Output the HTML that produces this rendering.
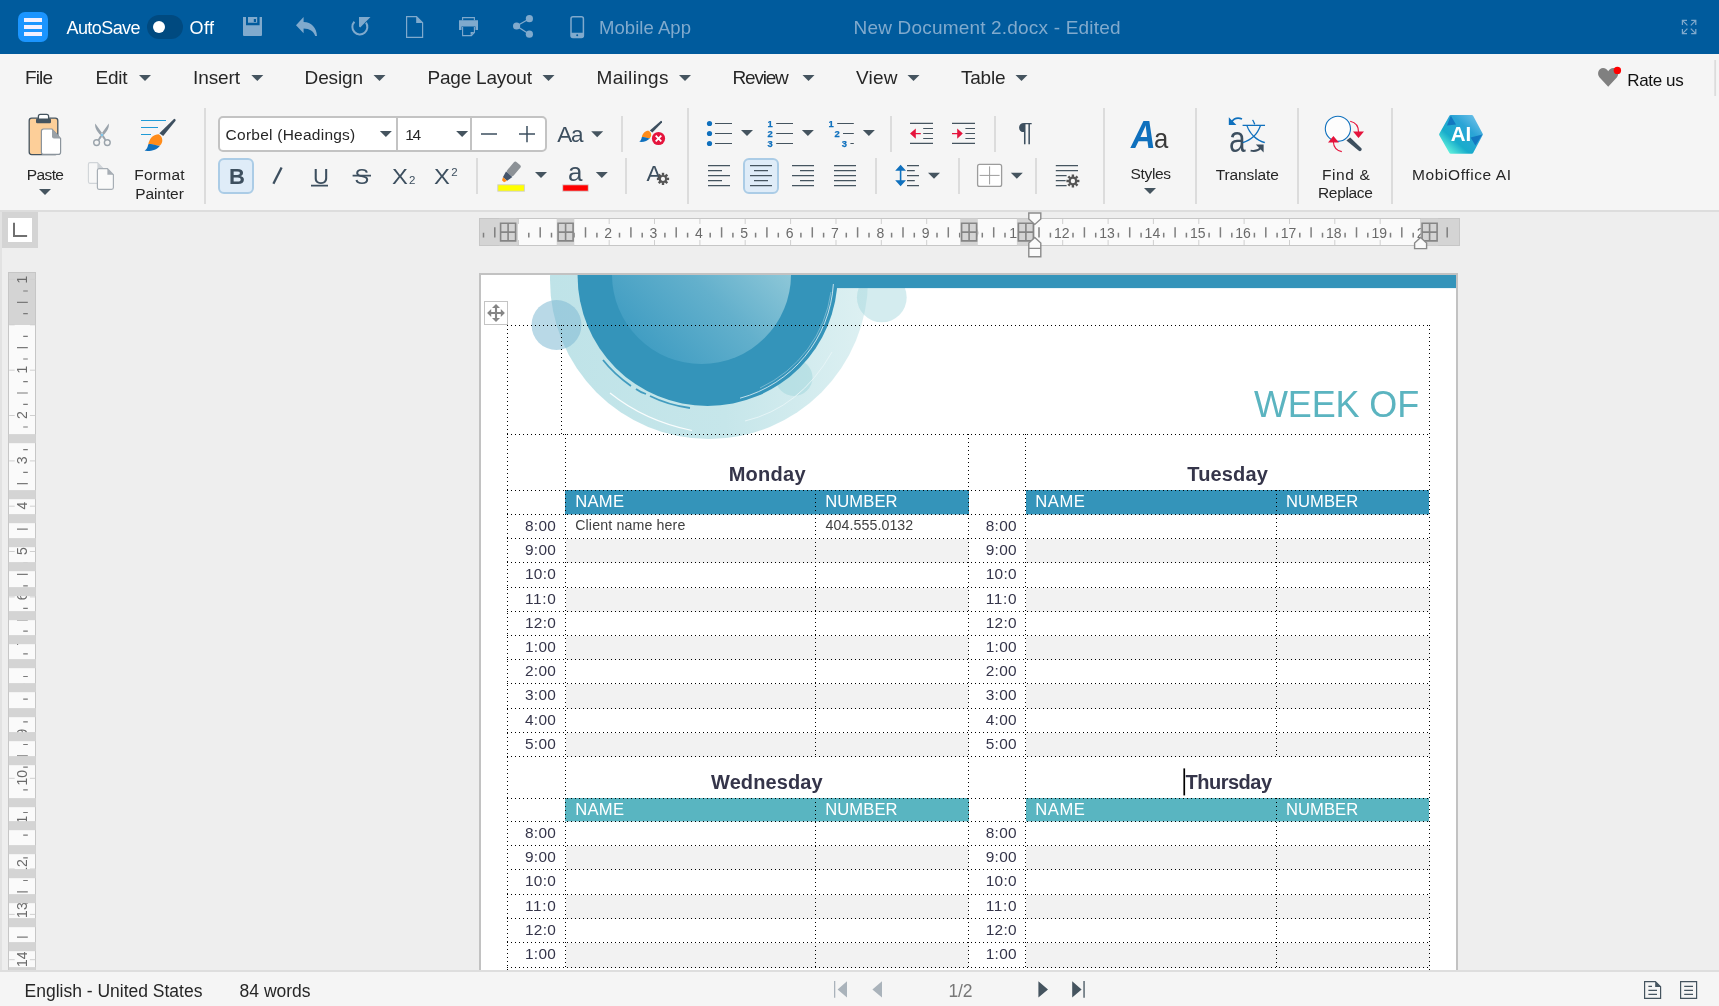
<!DOCTYPE html><html lang="en"><head><meta charset="utf-8"><title>New Document 2.docx - MobiOffice</title><style>
*{box-sizing:border-box;margin:0;padding:0}
html,body{width:1719px;height:1006px;overflow:hidden;background:#eeeeee}
body{font-family:"Liberation Sans","Noto Sans CJK SC",sans-serif;}
#app{will-change:transform;position:relative;width:1719px;height:1006px;overflow:hidden;background:#eeeeee}
.abs{position:absolute}
.t{position:absolute;white-space:nowrap;line-height:1;}
.titlebar{position:absolute;left:0;top:0;width:1719px;height:54px;background:#005B9D}
.menubar{position:absolute;left:0;top:54px;width:1719px;height:46px;background:#f5f5f5}
.ribbon{position:absolute;left:0;top:100px;width:1719px;height:112px;background:#f5f5f5;border-bottom:2px solid #dddddd}
.workspace{position:absolute;left:0;top:212px;width:1719px;height:758px;background:#eeeeee;overflow:hidden}
.statusbar{position:absolute;left:0;top:970px;width:1719px;height:36px;background:#f5f5f5;border-top:2px solid #dedede}
svg{position:absolute;left:0;top:0;overflow:visible}
.sep{position:absolute;width:2px;background:#dcdcdc}
.page{position:absolute;left:479px;top:61px;width:979px;height:720px;background:#fff;border:2px solid #c2c2c2;border-bottom:none;overflow:hidden}
</style></head><body><div id="app">
<div class="titlebar">
<div class="abs" style="left:18px;top:12px;width:30px;height:30px;border-radius:7px;background:#1B95FF"></div>
<div class="abs" style="left:24px;top:18px;width:18px;height:4px;background:#f3f0ff"></div>
<div class="abs" style="left:24px;top:25px;width:18px;height:4px;background:#f3f0ff"></div>
<div class="abs" style="left:24px;top:32px;width:18px;height:4px;background:#f3f0ff"></div>
<span class="t" style="left:66.50px;top:19.00px;font-size:18px;color:#fff;letter-spacing:-0.579px;">AutoSave</span>
<div class="abs" style="left:147px;top:15px;width:35.5px;height:24px;border-radius:12px;background:#004A80"></div>
<div class="abs" style="left:153px;top:21.4px;width:12px;height:12px;border-radius:6px;background:#fff"></div>
<span class="t" style="left:189.50px;top:19.00px;font-size:18px;color:#fff;letter-spacing:0.375px;">Off</span>
<span class="t" style="left:599.00px;top:19.00px;font-size:18.5px;color:#80AACD;letter-spacing:0.050px;">Mobile App</span>
<span class="t" style="left:853.50px;top:18.00px;font-size:19px;color:#80AACD;letter-spacing:0.189px;">New Document 2.docx - Edited</span>
<svg width="1719" height="54" viewBox="0 0 1719 54">
<path fill="#80AACD" fill-rule="evenodd" d="M243,17 H262 V35 Q262,36 261,36 H244 Q243,36 243,35 Z M246,17 V25.2 H259.6 V17 Z"/>
<path fill="#80AACD" fill-rule="evenodd" d="M248,17 H257.2 V22.7 H248 Z M253.8,19 V22 H256 V19 Z"/>
<path fill="#80AACD" d="M296,25.2 L303.6,17 V22 C311.5,22.3 316.5,27.5 317,36 H315.2 C313.5,31.2 309.8,28.6 303.6,28.5 V33.2 Z"/>
<path fill="none" stroke="#80AACD" stroke-width="2" d="M354.4,21.8 A7.5,7.5 0 1 0 366,22.6"/>
<path fill="#80AACD" d="M359,17 H370.5 L360.2,27.4 L359,26.4 Z"/>
<path fill="none" stroke="#80AACD" stroke-width="1.2" d="M406.6,16.6 H416.5 L422.6,22.8 V37.4 H406.6 Z"/>
<path fill="#80AACD" d="M416.2,16.6 L422.6,23 H416.2 Z"/>
<path fill="#80AACD" d="M459,20.3 H478 V30 H475.5 V26.6 H461.5 V30 H459 Z"/>
<path fill="none" stroke="#80AACD" stroke-width="1.1" d="M462.6,20.3 V17.6 H474.4 V20.3"/>
<path fill="none" stroke="#80AACD" stroke-width="1.1" d="M462.6,27 V35.6 H471.4 L474.4,32.6 V27"/>
<path fill="#80AACD" d="M470.6,35.6 V32 H474.6 Z"/>
<path fill="none" stroke="#80AACD" stroke-width="1.3" d="M529.4,18.7 L516.6,26 L529.4,34.2"/>
<circle cx="529.4" cy="18.7" r="3.6" fill="#80AACD"/>
<circle cx="516.6" cy="26" r="3.6" fill="#80AACD"/>
<circle cx="529.4" cy="34.2" r="3.6" fill="#80AACD"/>
<rect x="571" y="16.7" width="12.4" height="20.8" rx="2" fill="none" stroke="#80AACD" stroke-width="1.5"/>
<path fill="#80AACD" fill-rule="evenodd" d="M571,32.8 H583.4 V36 Q583.4,37.5 582,37.5 H572.4 Q571,37.5 571,36 Z M576.2,35.3 a1,1 0 1 0 2,0 a1,1 0 1 0 -2,0 Z"/>
<path fill="none" stroke="#80AACD" stroke-width="1.2" d="M1687.0,20.4 H1682.4 V25.0 M1682.4,20.4 L1687.4,25.4 M1691.2,20.4 H1695.8 V25.0 M1695.8,20.4 L1690.8,25.4 M1687.0,33.6 H1682.4 V29.0 M1682.4,33.6 L1687.4,28.6 M1691.2,33.6 H1695.8 V29.0 M1695.8,33.6 L1690.8,28.6 "/>
</svg>
</div>
<div class="menubar">
<span class="t" style="left:25.00px;top:14.00px;font-size:19px;color:#262626;letter-spacing:-0.867px;">File</span>
<span class="t" style="left:95.50px;top:14.00px;font-size:19px;color:#262626;letter-spacing:-0.250px;">Edit</span>
<span class="t" style="left:193.00px;top:14.00px;font-size:19px;color:#262626;letter-spacing:-0.100px;">Insert</span>
<span class="t" style="left:304.60px;top:14.00px;font-size:19px;color:#262626;letter-spacing:-0.150px;">Design</span>
<span class="t" style="left:427.50px;top:14.00px;font-size:19px;color:#262626;letter-spacing:-0.220px;">Page Layout</span>
<span class="t" style="left:596.50px;top:14.00px;font-size:19px;color:#262626;letter-spacing:0.329px;">Mailings</span>
<span class="t" style="left:732.50px;top:14.00px;font-size:19px;color:#262626;letter-spacing:-1.200px;">Review</span>
<span class="t" style="left:856.00px;top:14.00px;font-size:19px;color:#262626;letter-spacing:0.200px;">View</span>
<span class="t" style="left:961.00px;top:14.00px;font-size:19px;color:#262626;letter-spacing:-0.225px;">Table</span>
<span class="t" style="left:1627.30px;top:17.70px;font-size:17px;color:#111;letter-spacing:-0.367px;">Rate us</span>
<svg width="1719" height="46" viewBox="0 54 1719 46"><path fill="#45545F" d="M139.0,75.0 H151.0 L145,81.0 Z"/><path fill="#45545F" d="M251.3,75.0 H263.3 L257.3,81.0 Z"/><path fill="#45545F" d="M373.5,75.0 H385.5 L379.5,81.0 Z"/><path fill="#45545F" d="M542.5,75.0 H554.5 L548.5,81.0 Z"/><path fill="#45545F" d="M679.0,75.0 H691.0 L685,81.0 Z"/><path fill="#45545F" d="M802.5,75.0 H814.5 L808.5,81.0 Z"/><path fill="#45545F" d="M907.5,75.0 H919.5 L913.5,81.0 Z"/><path fill="#45545F" d="M1015.5,75.0 H1027.5 L1021.5,81.0 Z"/>
<path fill="#808080" d="M1608.2,86.8 L1599.4,77.2 C1596.6,73.6 1598.6,68 1603,68 C1605.4,68 1607.2,69.4 1608.2,71.2 C1609.2,69.4 1611,68 1613.4,68 C1617.8,68 1619.8,73.6 1617,77.2 Z"/>
<circle cx="1617.4" cy="70.4" r="3.7" fill="#ff0000"/>
<rect x="1714.3" y="60" width="1.8" height="36" fill="#dcdcdc"/>
</svg>
</div>
<div class="ribbon">
<div class="sep" style="left:204.0px;top:8.0px;height:96.0px"></div>
<div class="sep" style="left:686.6px;top:8.0px;height:96.0px"></div>
<div class="sep" style="left:1102.6px;top:8.0px;height:96.0px"></div>
<div class="sep" style="left:1195.0px;top:8.0px;height:96.0px"></div>
<div class="sep" style="left:1297.0px;top:8.0px;height:96.0px"></div>
<div class="sep" style="left:1391.0px;top:8.0px;height:96.0px"></div>
<div class="sep" style="left:621.0px;top:16.2px;height:35.8px"></div>
<div class="sep" style="left:889.8px;top:16.2px;height:35.8px"></div>
<div class="sep" style="left:993.8px;top:16.2px;height:35.8px"></div>
<div class="sep" style="left:476.0px;top:58.3px;height:35.4px"></div>
<div class="sep" style="left:624.9px;top:58.3px;height:35.4px"></div>
<div class="sep" style="left:875.0px;top:58.3px;height:35.4px"></div>
<div class="sep" style="left:958.0px;top:58.3px;height:35.4px"></div>
<div class="sep" style="left:1035.0px;top:58.3px;height:35.4px"></div>
<div class="abs" style="left:218px;top:16.200000000000003px;width:329px;height:35.4px;border:2px solid #c3c3c3;border-radius:5px;background:#fff"></div>
<div class="abs" style="left:396px;top:16.200000000000003px;width:2px;height:35.4px;background:#c3c3c3"></div>
<div class="abs" style="left:469.8px;top:16.200000000000003px;width:2px;height:35.4px;background:#c3c3c3"></div>
<div class="abs" style="left:218px;top:58.19999999999999px;width:35.8px;height:35.6px;border:2px solid #ABCCE6;border-radius:6px;background:#DFECF8"></div>
<div class="abs" style="left:743px;top:58.19999999999999px;width:35.8px;height:35.6px;border:2px solid #ABCCE6;border-radius:6px;background:#DFECF8"></div>
<span class="t" style="left:26.80px;top:66.60px;font-size:15.5px;color:#262626;letter-spacing:-0.612px;">Paste</span>
<span class="t" style="left:134.20px;top:66.60px;font-size:15.5px;color:#262626;letter-spacing:0.260px;">Format</span>
<span class="t" style="left:135.20px;top:85.60px;font-size:15.5px;color:#262626;letter-spacing:-0.083px;">Painter</span>
<span class="t" style="left:225.60px;top:26.50px;font-size:15.5px;color:#262626;letter-spacing:0.244px;">Corbel (Headings)</span>
<span class="t" style="left:405.20px;top:26.50px;font-size:15.5px;color:#262626;letter-spacing:-1.200px;">14</span>
<span class="t" style="left:557.30px;top:23.50px;font-size:22.5px;color:#3D4F5F;letter-spacing:-1.200px;">Aa</span>
<span class="t" style="left:229.00px;top:65.70px;font-size:22px;color:#3D4F5F;font-weight:700;">B</span>
<span class="t" style="left:313.00px;top:65.70px;font-size:22px;color:#3D4F5F;">U</span>
<span class="t" style="left:354.60px;top:65.70px;font-size:22px;color:#3D4F5F;">S</span>
<span class="t" style="left:392.30px;top:65.70px;font-size:22px;color:#3D4F5F;transform:scaleX(1.08);transform-origin:0 0;">X</span>
<span class="t" style="left:408.90px;top:75.00px;font-size:11.5px;color:#3D4F5F;">2</span>
<span class="t" style="left:434.40px;top:65.70px;font-size:22px;color:#3D4F5F;transform:scaleX(1.08);transform-origin:0 0;">X</span>
<span class="t" style="left:451.30px;top:67.00px;font-size:11.5px;color:#3D4F5F;">2</span>
<span class="t" style="left:568.00px;top:59.20px;font-size:26px;color:#3D4F5F;">a</span>
<span class="t" style="left:646.40px;top:62.70px;font-size:22.5px;color:#3D4F5F;">A</span>
<span class="t" style="left:1018.00px;top:19.50px;font-size:25.6px;color:#3D4F5F;transform:scaleX(1.08);transform-origin:0 0;">¶</span>
<span class="t" style="left:1130.60px;top:65.90px;font-size:15.5px;color:#262626;letter-spacing:-0.340px;">Styles</span>
<span class="t" style="left:1215.80px;top:66.80px;font-size:15.5px;color:#262626;letter-spacing:-0.119px;">Translate</span>
<span class="t" style="left:1322.00px;top:66.60px;font-size:15.5px;color:#262626;letter-spacing:0.600px;">Find &amp;</span>
<span class="t" style="left:1318.00px;top:85.40px;font-size:15.5px;color:#262626;letter-spacing:-0.325px;">Replace</span>
<span class="t" style="left:1412.00px;top:66.60px;font-size:15.5px;color:#262626;letter-spacing:0.600px;">MobiOffice AI</span>
<span class="t" style="left:1131.10px;top:14.90px;font-size:39px;color:#0F70BD;font-weight:700;font-style:italic;transform:scaleX(0.88);transform-origin:0 0;">A</span>
<span class="t" style="left:1154.30px;top:23.90px;font-size:28.5px;color:#3a3a3a;transform:scaleX(0.9);transform-origin:0 0;">a</span>
<span class="t" style="left:1229.40px;top:22.40px;font-size:36px;color:#3D4F5F;transform:scaleX(0.83);transform-origin:0 0;">a</span>
<span class="t" style="left:1241.2px;top:14.599999999999994px;font-size:25px;color:#0F70BD;font-family:'Noto Sans CJK SC','Liberation Sans',sans-serif;font-weight:300;line-height:1.2">文</span>
<svg width="1719" height="112" viewBox="0 100 1719 112">
<defs><linearGradient id="aig" x1="0.1" y1="0.9" x2="0.9" y2="0.1"><stop offset="0" stop-color="#5EF0DC"/><stop offset="0.3" stop-color="#18ACCB"/><stop offset="0.7" stop-color="#2BA4D6"/><stop offset="1" stop-color="#63BCE6"/></linearGradient></defs>
<path fill="#45545F" d="M39.0,189.0 H51.0 L45,195.0 Z"/>
<path fill="#45545F" d="M379.9,131.0 H391.9 L385.9,137.0 Z"/>
<path fill="#45545F" d="M456.1,131.0 H468.1 L462.1,137.0 Z"/>
<path fill="#45545F" d="M591.2,131.2 H603.2 L597.2,137.2 Z"/>
<path fill="#45545F" d="M535.0,172.0 H547.0 L541,178.0 Z"/>
<path fill="#45545F" d="M595.8,172.0 H607.8 L601.8,178.0 Z"/>
<path fill="#45545F" d="M741.0,129.9 H753.0 L747,135.9 Z"/>
<path fill="#45545F" d="M801.9,129.9 H813.9 L807.9,135.9 Z"/>
<path fill="#45545F" d="M862.9,129.9 H874.9 L868.9,135.9 Z"/>
<path fill="#45545F" d="M928.0,172.8 H940.0 L934,178.8 Z"/>
<path fill="#45545F" d="M1010.8,172.8 H1022.8 L1016.8,178.8 Z"/>
<path fill="#45545F" d="M1144.0,188.0 H1156.0 L1150,194.0 Z"/>
<rect x="29.2" y="118.2" width="28.6" height="36.4" rx="2.5" fill="#FDCF99" stroke="#45545F" stroke-width="1.3"/>
<rect x="38.4" y="114.3" width="10.2" height="7" rx="2" fill="#fff" stroke="#45545F" stroke-width="1.3"/>
<rect x="36" y="118.6" width="15" height="4.6" rx="1.2" fill="#45545F"/>
<path d="M43.6,129 H52 L60.6,138.4 V152.2 Q60.6,154.4 58.4,154.4 H43.6 Q41.4,154.4 41.4,152.2 V131.2 Q41.4,129 43.6,129 Z" fill="#fff" stroke="#8b949c" stroke-width="1.2"/>
<path d="M52,129 L60.6,138.4 H54 Q52,138.4 52,136.4 Z" fill="#9aa1a7"/>
<g fill="none" stroke="#9aa3ab" stroke-width="1.4"><circle cx="96.6" cy="142.6" r="2.9"/><circle cx="107.3" cy="142.6" r="2.9"/></g>
<path fill="#9aa3ab" d="M95.2,123.4 C94.6,127 96.4,131 101,135.6 L104.8,140.4 L106.2,139.4 L102.8,134 Z M108.8,123.4 C109.4,127 107.6,131 103,135.6 L99.2,140.4 L97.8,139.4 L101.2,134 Z"/>
<circle cx="102" cy="135" r="1.2" fill="#7cc4ea"/>
<path d="M90,162.6 H97.4 L102.8,168.2 V181.6 Q102.8,183.4 101,183.4 H90 Q88.4,183.4 88.4,181.6 V164.2 Q88.4,162.6 90,162.6 Z" fill="#f7f7f7" stroke="#d0d4d8" stroke-width="1.1"/>
<path d="M97.4,162.6 L102.8,168.2 H97.4 Z" fill="#d0d4d8"/>
<path d="M99,168.6 H107.4 L113.4,174.8 V187.6 Q113.4,189.4 111.6,189.4 H99 Q97.4,189.4 97.4,187.6 V170.2 Q97.4,168.6 99,168.6 Z" fill="#fafafa" stroke="#a7aeb5" stroke-width="1.2"/>
<path d="M107.4,168.6 L113.4,174.8 H107.4 Z" fill="#a7aeb5"/>
<path stroke="#1E9BD7" stroke-width="1" fill="none" d="M141,120.5 H166 M141,127.5 H158 M141,134.5 H151"/>
<path fill="#3D4F5F" d="M174.2,118.8 Q175.8,119 175.6,120.8 L163.2,136 L159.4,133.2 Z"/>
<path fill="#FF8C1A" d="M158.6,134.2 C154,134.2 149.4,137.6 148.2,144.8 C152,143 156,146.4 160,145.6 C163.6,142.4 163,136.6 158.6,134.2 Z"/>
<path fill="#0F70BD" d="M148.2,144.6 C147.6,147.4 146.8,149.4 144.6,150.8 C151,151.4 157,150 160.2,145.4 C156,146.6 152,142.8 148.2,144.6 Z"/>
<path stroke="#3D4F5F" stroke-width="1.5" fill="none" d="M481,134 H497 M519,134 H535 M527,126 V142.2"/>
<path fill="#3D4F5F" d="M661,120.8 Q662.4,121 662,122.4 L652.4,132.6 L649.8,130.4 Z"/>
<path fill="#FF8C1A" d="M648.6,130.8 C645.4,130.6 642.6,133 641.8,137.4 C644.6,136.4 647,138.6 649.8,138 C652,136 651.6,132.4 648.6,130.8 Z"/>
<path fill="#0F70BD" d="M641.8,137.2 C641.4,139.4 640.6,140.8 639.2,141.8 C643.4,142.2 647.6,141.4 650,138 C647,138.8 644.6,136.2 641.8,137.2 Z"/>
<circle cx="658.5" cy="138.5" r="6.6" fill="#E5143C"/>
<path stroke="#fff" stroke-width="1.8" fill="none" d="M655.7,135.7 L661.3,141.3 M661.3,135.7 L655.7,141.3"/>
<path stroke="#3D4F5F" stroke-width="2.3" fill="none" d="M281.6,167.6 L273.4,183.8"/>
<path stroke="#3D4F5F" stroke-width="1.6" fill="none" d="M311,185.6 H328 M352.6,175.6 H371"/>
<g transform="rotate(41 510.5 172.5)"><rect x="506.4" y="160.6" width="8.4" height="14" rx="2" fill="#8C9196"/><path d="M506.4,174.6 H514.8 L513.4,181 H507.8 Z" fill="#44546A"/><path d="M508,181 H513.2 L512,184 H509.2 Z" fill="#FF8C1A"/></g>
<rect x="497.8" y="184.8" width="26.6" height="6.4" fill="#FFFF00" stroke="#cfcfcf" stroke-width="0.9"/>
<rect x="562.7" y="184.8" width="25.6" height="6.4" fill="#FF0000" stroke="#d8d8d8" stroke-width="0.9"/>
<g fill="#555"><path fill-rule="evenodd" d="M659.0,178.9 a4.0,4.0 0 1 0 8.0,0 a4.0,4.0 0 1 0 -8.0,0 Z M660.9,178.9 a2.1,2.1 0 1 1 4.2,0 a2.1,2.1 0 1 1 -4.2,0 Z"/><rect x="661.8" y="172.8" width="2.4" height="2.6" transform="rotate(0 663 178.9)"/><rect x="661.8" y="172.8" width="2.4" height="2.6" transform="rotate(45 663 178.9)"/><rect x="661.8" y="172.8" width="2.4" height="2.6" transform="rotate(90 663 178.9)"/><rect x="661.8" y="172.8" width="2.4" height="2.6" transform="rotate(135 663 178.9)"/><rect x="661.8" y="172.8" width="2.4" height="2.6" transform="rotate(180 663 178.9)"/><rect x="661.8" y="172.8" width="2.4" height="2.6" transform="rotate(225 663 178.9)"/><rect x="661.8" y="172.8" width="2.4" height="2.6" transform="rotate(270 663 178.9)"/><rect x="661.8" y="172.8" width="2.4" height="2.6" transform="rotate(315 663 178.9)"/></g>
<circle cx="709.5" cy="123.5" r="2.6" fill="#0F70BD"/>
<circle cx="709.5" cy="133.5" r="2.6" fill="#0F70BD"/>
<circle cx="709.5" cy="143.5" r="2.6" fill="#0F70BD"/>
<path stroke="#45545F" stroke-width="1.1" fill="none" d="M715,123.5 H732 M715,133.5 H732 M715,143.5 H732 M776.2,123.5 H793 M776.2,133.5 H793 M776.2,143.5 H793 M837.2,123.5 H853.8 M843,133.5 H853.8 M850.4,143.5 H853.8"/>
<g font-family="Liberation Sans, sans-serif" font-weight="700" font-size="9.4" fill="#0F70BD" stroke="#0F70BD" stroke-width="0.25"><text x="767.4" y="127">1</text><text x="767.4" y="137">2</text><text x="767.4" y="147">3</text><text x="828.6" y="127">1</text><text x="834.6" y="137">2</text><text x="841.8" y="147">3</text></g>
<path stroke="#45545F" stroke-width="1.2" fill="none" d="M910,123.4 H933 M910,143.4 H933 M923.2,128.5 H933 M923.2,133.5 H933 M923.2,138.5 H933 M952,123.4 H975 M952,143.4 H975 M965.4,128.5 H975 M965.4,133.5 H975 M965.4,138.5 H975"/>
<path fill="#E5143C" d="M910,133.6 L915.8,128.4 V132.9 H920.8 V134.3 H915.8 V138.8 Z M962.8,133.6 L957.2,128.4 V132.9 H952 V134.3 H957.2 V138.8 Z"/>
<path stroke="#45545F" stroke-width="1.25" fill="none" d="M708,165.5 H730 M708,170.5 H722 M708,175.5 H730 M708,180.5 H722 M708,185.5 H730 M750,165.5 H772 M754.0,170.5 H768.0 M750,175.5 H772 M754.0,180.5 H768.0 M750,185.5 H772 M792,165.5 H814 M800,170.5 H814 M792,175.5 H814 M800,180.5 H814 M792,185.5 H814 M834,165.5 H856 M834,170.5 H856 M834,175.5 H856 M834,180.5 H856 M834,185.5 H856 M907,165.5 H919 M907,170.5 H914.8 M907,175.5 H919 M907,180.5 H914.8 M907,185.5 H919 M1055.8,165.5 H1078 M1055.8,170.5 H1078 M1055.8,175.5 H1066.6 M1055.8,180.5 H1065.6 M1055.8,185.5 H1066.6"/>
<path fill="#0F70BD" d="M900.6,164.8 L906,170.8 H901.4 V180.2 H906 L900.6,186.2 L895.2,180.2 H899.8 V170.8 H895.2 Z"/>
<rect x="977.6" y="164.4" width="24" height="22" rx="2" fill="#fff" stroke="#9c9c9c" stroke-width="1.3"/>
<path stroke="#9c9c9c" stroke-width="1" fill="none" d="M989.6,166.4 V184.4 M979.6,175.4 H999.6"/>
<g fill="#555"><path fill-rule="evenodd" d="M1068.5000000000002,181 a4.3999999999999995,4.3999999999999995 0 1 0 8.799999999999999,0 a4.3999999999999995,4.3999999999999995 0 1 0 -8.799999999999999,0 Z M1070.7,181 a2.2,2.2 0 1 1 4.4,0 a2.2,2.2 0 1 1 -4.4,0 Z"/><rect x="1071.7" y="174.5" width="2.4" height="2.6" transform="rotate(0 1072.9 181)"/><rect x="1071.7" y="174.5" width="2.4" height="2.6" transform="rotate(45 1072.9 181)"/><rect x="1071.7" y="174.5" width="2.4" height="2.6" transform="rotate(90 1072.9 181)"/><rect x="1071.7" y="174.5" width="2.4" height="2.6" transform="rotate(135 1072.9 181)"/><rect x="1071.7" y="174.5" width="2.4" height="2.6" transform="rotate(180 1072.9 181)"/><rect x="1071.7" y="174.5" width="2.4" height="2.6" transform="rotate(225 1072.9 181)"/><rect x="1071.7" y="174.5" width="2.4" height="2.6" transform="rotate(270 1072.9 181)"/><rect x="1071.7" y="174.5" width="2.4" height="2.6" transform="rotate(315 1072.9 181)"/></g>
<path fill="none" stroke="#0F70BD" stroke-width="1.8" d="M1242,119 C1238,117.4 1234,118.4 1231.4,122"/>
<path fill="#0F70BD" d="M1228.8,117.2 V125 H1236.4 Z"/>
<path fill="none" stroke="#3D4F5F" stroke-width="1.8" d="M1250.6,150.6 C1254.6,151.6 1258.4,150.6 1261,147.6"/>
<path fill="#3D4F5F" d="M1263.6,144.6 V152.6 L1255.8,144.6 Z"/>
<circle cx="1337.9" cy="128.8" r="12.6" fill="#fdfdfd" stroke="#0F70BD" stroke-width="1.1"/>
<path fill="#3D4F5F" d="M1346.4,140.6 L1350.2,137.6 L1361.6,148.4 Q1362.2,150 1360.6,151 Q1359.6,151.4 1358.8,150.8 Z"/>
<path fill="none" stroke="#E5143C" stroke-width="1.1" d="M1350.2,121.2 C1355.6,122.4 1358.6,126.6 1358.5,132 M1333.4,142 C1333.6,147 1336.8,150.6 1341.8,151.6"/>
<path fill="#E5143C" d="M1353,131.4 H1364 L1358.5,137.9 Z M1328,142.6 H1338.9 L1333.4,135.9 Z"/>
<path fill="url(#aig)" stroke="url(#aig)" stroke-width="3" stroke-linejoin="round" d="M1440.6,134.4 L1450.7,116.5 H1471.8 L1481.4,134.4 L1471.8,152.3 H1450.7 Z"/>
<path fill="#0F70BD" opacity="0.85" d="M1451,116 L1456,124.6 L1447,125.4 L1450.2,117 Z M1482.4,134.4 L1475.4,145.6 L1470.6,137.4 Z"/>
<text x="1461" y="141.4" text-anchor="middle" font-family="Liberation Sans, sans-serif" font-weight="700" font-size="20.5" fill="#fff">AI</text>
</svg>
</div>
<div class="workspace">
<div class="abs" style="left:0;top:0;width:2px;height:758px;background:#e2e2e2"></div>
<div class="abs" style="left:2px;top:0px;width:36px;height:36px;background:#d4d4d4"></div>
<div class="abs" style="left:8px;top:6px;width:24px;height:24px;background:#ffffff"></div>
<svg width="40" height="40" viewBox="0 212 40 40"><path fill="none" stroke="#707070" stroke-width="2" d="M14,222.8 V235.9 H27.1"/></svg>
<div class="abs" style="left:479px;top:6px;width:981px;height:28px;background:#fafafa;border:1.3px solid #c9c9c9"></div>
<div class="abs" style="left:479px;top:6px;width:39px;height:28px;background:#d4d4d4"></div>
<div class="abs" style="left:1420.4px;top:6px;width:39.59999999999991px;height:28px;background:#d4d4d4"></div>
<div class="abs" style="left:479px;top:6px;width:981px;height:28px;border:1.3px solid #c6c6c6"></div>
<svg width="1719" height="60" viewBox="0 212 1719 60">
<path stroke="#cfcfcf" stroke-width="1" fill="none" d="M518.5,219 V224 M518.5,240 V245 M563.9,219 V224 M563.9,240 V245 M609.2,219 V224 M609.2,240 V245 M654.5,219 V224 M654.5,240 V245 M699.9,219 V224 M699.9,240 V245 M745.2,219 V224 M745.2,240 V245 M790.6,219 V224 M790.6,240 V245 M836.0,219 V224 M836.0,240 V245 M881.3,219 V224 M881.3,240 V245 M926.7,219 V224 M926.7,240 V245 M972.0,219 V224 M972.0,240 V245 M1017.4,219 V224 M1017.4,240 V245 M1062.7,219 V224 M1062.7,240 V245 M1108.1,219 V224 M1108.1,240 V245 M1153.4,219 V224 M1153.4,240 V245 M1198.8,219 V224 M1198.8,240 V245 M1244.1,219 V224 M1244.1,240 V245 M1289.5,219 V224 M1289.5,240 V245 M1334.8,219 V224 M1334.8,240 V245 M1380.2,219 V224 M1380.2,240 V245 M1425.5,219 V224 M1425.5,240 V245 "/>
<path stroke="#7f7f7f" stroke-width="1.5" fill="none" d="M483.5,232.8 V237.4 M494.8,227.2 V237.4 M506.2,232.8 V237.4 M528.8,232.8 V237.4 M540.2,227.2 V237.4 M551.5,232.8 V237.4 M574.2,232.8 V237.4 M585.5,227.2 V237.4 M596.9,232.8 V237.4 M619.5,232.8 V237.4 M630.9,227.2 V237.4 M642.2,232.8 V237.4 M664.9,232.8 V237.4 M676.2,227.2 V237.4 M687.6,232.8 V237.4 M710.2,232.8 V237.4 M721.6,227.2 V237.4 M732.9,232.8 V237.4 M755.6,232.8 V237.4 M766.9,227.2 V237.4 M778.3,232.8 V237.4 M800.9,232.8 V237.4 M812.3,227.2 V237.4 M823.6,232.8 V237.4 M846.3,232.8 V237.4 M857.6,227.2 V237.4 M869.0,232.8 V237.4 M891.6,232.8 V237.4 M903.0,227.2 V237.4 M914.3,232.8 V237.4 M937.0,232.8 V237.4 M948.3,227.2 V237.4 M959.7,232.8 V237.4 M982.3,232.8 V237.4 M993.7,227.2 V237.4 M1005.0,232.8 V237.4 M1027.7,232.8 V237.4 M1039.0,227.2 V237.4 M1050.4,232.8 V237.4 M1073.0,232.8 V237.4 M1084.4,227.2 V237.4 M1095.7,232.8 V237.4 M1118.4,232.8 V237.4 M1129.7,227.2 V237.4 M1141.1,232.8 V237.4 M1163.7,232.8 V237.4 M1175.1,227.2 V237.4 M1186.4,232.8 V237.4 M1209.1,232.8 V237.4 M1220.4,227.2 V237.4 M1231.8,232.8 V237.4 M1254.4,232.8 V237.4 M1265.8,227.2 V237.4 M1277.1,232.8 V237.4 M1299.8,232.8 V237.4 M1311.1,227.2 V237.4 M1322.5,232.8 V237.4 M1345.1,232.8 V237.4 M1356.5,227.2 V237.4 M1367.8,232.8 V237.4 M1390.5,232.8 V237.4 M1401.8,227.2 V237.4 M1413.2,232.8 V237.4 M1435.8,232.8 V237.4 M1447.2,227.2 V237.4 "/>
<g font-family="Liberation Sans, sans-serif" font-size="14" fill="#6a6a6a"><text x="562.9" y="238.2" text-anchor="middle">1</text><text x="608.2" y="238.2" text-anchor="middle">2</text><text x="653.5" y="238.2" text-anchor="middle">3</text><text x="698.9" y="238.2" text-anchor="middle">4</text><text x="744.2" y="238.2" text-anchor="middle">5</text><text x="789.6" y="238.2" text-anchor="middle">6</text><text x="835.0" y="238.2" text-anchor="middle">7</text><text x="880.3" y="238.2" text-anchor="middle">8</text><text x="925.7" y="238.2" text-anchor="middle">9</text><text x="971.0" y="238.2" text-anchor="middle">10</text><text x="1016.4" y="238.2" text-anchor="middle">11</text><text x="1061.7" y="238.2" text-anchor="middle">12</text><text x="1107.1" y="238.2" text-anchor="middle">13</text><text x="1152.4" y="238.2" text-anchor="middle">14</text><text x="1197.8" y="238.2" text-anchor="middle">15</text><text x="1243.1" y="238.2" text-anchor="middle">16</text><text x="1288.5" y="238.2" text-anchor="middle">17</text><text x="1333.8" y="238.2" text-anchor="middle">18</text><text x="1379.2" y="238.2" text-anchor="middle">19</text><text x="1424.5" y="238.2" text-anchor="middle">20</text></g>
<rect x="499.2" y="218.6" width="17.6" height="26.8" fill="#d4d4d4"/>
<path fill="none" stroke="#858585" stroke-width="1.6" d="M500.6,223.3 H515.6 V240.9 H500.6 Z M508.1,223.3 V240.9 M500.6,232.1 H515.6"/>
<rect x="556.7" y="218.6" width="17.6" height="26.8" fill="#d4d4d4"/>
<path fill="none" stroke="#858585" stroke-width="1.6" d="M558.1,223.3 H573.1 V240.9 H558.1 Z M565.6,223.3 V240.9 M558.1,232.1 H573.1"/>
<rect x="960.2" y="218.6" width="17.6" height="26.8" fill="#d4d4d4"/>
<path fill="none" stroke="#858585" stroke-width="1.6" d="M961.6,223.3 H976.6 V240.9 H961.6 Z M969.1,223.3 V240.9 M961.6,232.1 H976.6"/>
<rect x="1017.0" y="218.6" width="17.6" height="26.8" fill="#d4d4d4"/>
<path fill="none" stroke="#858585" stroke-width="1.6" d="M1018.4,223.3 H1033.3999999999999 V240.9 H1018.4 Z M1025.8999999999999,223.3 V240.9 M1018.4,232.1 H1033.3999999999999"/>
<rect x="1420.7" y="218.6" width="17.6" height="26.8" fill="#d4d4d4"/>
<path fill="none" stroke="#858585" stroke-width="1.6" d="M1422.1,223.3 H1437.1 V240.9 H1422.1 Z M1429.6,223.3 V240.9 M1422.1,232.1 H1437.1"/>
<path fill="#fafafa" stroke="#8a8a8a" stroke-width="1.4" d="M1028.8,213 H1040.8 V219 L1034.8,224.4 L1028.8,219 Z"/>
<path fill="#fafafa" stroke="#8a8a8a" stroke-width="1.4" d="M1034.8,237.4 L1040.8,243 V248.4 H1028.8 V243 Z M1028.8,248.4 H1040.8 V256.8 H1028.8 Z"/>
<path fill="#fafafa" stroke="#8a8a8a" stroke-width="1.4" d="M1420.6,237.4 L1426.6,243 V248.6 H1414.6 V243 Z"/>
</svg>
<div class="abs" style="left:8.2px;top:60.19999999999999px;width:28.2px;height:720px;background:#fafafa;border:1.3px solid #c9c9c9"></div>
<div class="abs" style="left:8.2px;top:60.19999999999999px;width:28.2px;height:52.60000000000002px;background:#d4d4d4"></div>
<div class="abs" style="left:8.2px;top:60.19999999999999px;width:28.2px;height:720px;border:1.3px solid #c6c6c6"></div>
<svg width="60" height="758" viewBox="0 212 60 758">
<path stroke="#cfcfcf" stroke-width="1" fill="none" d="M9.2,279.4 H14.7 M29.9,279.4 H35.4 M9.2,324.8 H14.7 M29.9,324.8 H35.4 M9.2,370.2 H14.7 M29.9,370.2 H35.4 M9.2,415.5 H14.7 M29.9,415.5 H35.4 M9.2,460.9 H14.7 M29.9,460.9 H35.4 M9.2,506.2 H14.7 M29.9,506.2 H35.4 M9.2,551.5 H14.7 M29.9,551.5 H35.4 M9.2,596.9 H14.7 M29.9,596.9 H35.4 M9.2,642.2 H14.7 M29.9,642.2 H35.4 M9.2,687.6 H14.7 M29.9,687.6 H35.4 M9.2,733.0 H14.7 M29.9,733.0 H35.4 M9.2,778.3 H14.7 M29.9,778.3 H35.4 M9.2,823.6 H14.7 M29.9,823.6 H35.4 M9.2,869.0 H14.7 M29.9,869.0 H35.4 M9.2,914.4 H14.7 M29.9,914.4 H35.4 M9.2,959.7 H14.7 M29.9,959.7 H35.4 "/>
<path stroke="#7a7a7a" stroke-width="1.2" fill="none" d="M23.2,291.0 H27.8 M17,302.3 H27.8 M23.2,313.7 H27.8 M23.2,336.3 H27.8 M17,347.7 H27.8 M23.2,359.0 H27.8 M23.2,381.7 H27.8 M17,393.0 H27.8 M23.2,404.4 H27.8 M23.2,427.0 H27.8 M17,438.4 H27.8 M23.2,449.7 H27.8 M23.2,472.4 H27.8 M17,483.7 H27.8 M23.2,495.1 H27.8 M23.2,517.7 H27.8 M17,529.1 H27.8 M23.2,540.4 H27.8 M23.2,563.1 H27.8 M17,574.4 H27.8 M23.2,585.8 H27.8 M23.2,608.4 H27.8 M17,619.8 H27.8 M23.2,631.1 H27.8 M23.2,653.8 H27.8 M17,665.1 H27.8 M23.2,676.5 H27.8 M23.2,699.1 H27.8 M17,710.5 H27.8 M23.2,721.8 H27.8 M23.2,744.5 H27.8 M17,755.8 H27.8 M23.2,767.2 H27.8 M23.2,789.8 H27.8 M17,801.2 H27.8 M23.2,812.5 H27.8 M23.2,835.2 H27.8 M17,846.5 H27.8 M23.2,857.9 H27.8 M23.2,880.5 H27.8 M17,891.9 H27.8 M23.2,903.2 H27.8 M23.2,925.9 H27.8 M17,937.2 H27.8 M23.2,948.6 H27.8 M23.2,971.2 H27.8 "/>
<g font-family="Liberation Sans, sans-serif" font-size="14" fill="#6a6a6a"><text x="0" y="0" text-anchor="middle" transform="translate(27.4 369.7) rotate(-90)">1</text><text x="0" y="0" text-anchor="middle" transform="translate(27.4 415.0) rotate(-90)">2</text><text x="0" y="0" text-anchor="middle" transform="translate(27.4 460.4) rotate(-90)">3</text><text x="0" y="0" text-anchor="middle" transform="translate(27.4 505.7) rotate(-90)">4</text><text x="0" y="0" text-anchor="middle" transform="translate(27.4 551.0) rotate(-90)">5</text><text x="0" y="0" text-anchor="middle" transform="translate(27.4 596.4) rotate(-90)">6</text><text x="0" y="0" text-anchor="middle" transform="translate(27.4 641.8) rotate(-90)">7</text><text x="0" y="0" text-anchor="middle" transform="translate(27.4 687.1) rotate(-90)">8</text><text x="0" y="0" text-anchor="middle" transform="translate(27.4 732.5) rotate(-90)">9</text><text x="0" y="0" text-anchor="middle" transform="translate(27.4 777.8) rotate(-90)">10</text><text x="0" y="0" text-anchor="middle" transform="translate(27.4 823.1) rotate(-90)">11</text><text x="0" y="0" text-anchor="middle" transform="translate(27.4 867.0) rotate(-90)">12</text><text x="0" y="0" text-anchor="middle" transform="translate(27.4 910.1) rotate(-90)">13</text><text x="0" y="0" text-anchor="middle" transform="translate(27.4 959.2) rotate(-90)">14</text><text x="0" y="0" text-anchor="middle" transform="translate(27.4 1004.5) rotate(-90)">15</text><text x="0" y="0" text-anchor="middle" transform="translate(27.4 279.6) rotate(-90)">1</text></g>
<rect x="8.799999999999999" y="434.1" width="27.0" height="9.1" fill="#d4d4d4"/>
<rect x="8.799999999999999" y="490.1" width="27.0" height="9.1" fill="#d4d4d4"/>
<rect x="8.799999999999999" y="514.1" width="27.0" height="9.1" fill="#d4d4d4"/>
<rect x="8.799999999999999" y="538.1" width="27.0" height="9.1" fill="#d4d4d4"/>
<rect x="8.799999999999999" y="562.1" width="27.0" height="9.1" fill="#d4d4d4"/>
<rect x="8.799999999999999" y="587.1" width="27.0" height="9.1" fill="#d4d4d4"/>
<rect x="8.799999999999999" y="611.1" width="27.0" height="9.1" fill="#d4d4d4"/>
<rect x="8.799999999999999" y="635.1" width="27.0" height="9.1" fill="#d4d4d4"/>
<rect x="8.799999999999999" y="659.1" width="27.0" height="9.1" fill="#d4d4d4"/>
<rect x="8.799999999999999" y="683.1" width="27.0" height="9.1" fill="#d4d4d4"/>
<rect x="8.799999999999999" y="708.1" width="27.0" height="9.1" fill="#d4d4d4"/>
<rect x="8.799999999999999" y="732.1" width="27.0" height="9.1" fill="#d4d4d4"/>
<rect x="8.799999999999999" y="756.1" width="27.0" height="9.1" fill="#d4d4d4"/>
<rect x="8.799999999999999" y="798.1" width="27.0" height="9.1" fill="#d4d4d4"/>
<rect x="8.799999999999999" y="821.1" width="27.0" height="9.1" fill="#d4d4d4"/>
<rect x="8.799999999999999" y="845.1" width="27.0" height="9.1" fill="#d4d4d4"/>
<rect x="8.799999999999999" y="869.1" width="27.0" height="9.1" fill="#d4d4d4"/>
<rect x="8.799999999999999" y="894.1" width="27.0" height="9.1" fill="#d4d4d4"/>
<rect x="8.799999999999999" y="918.1" width="27.0" height="9.1" fill="#d4d4d4"/>
<rect x="8.799999999999999" y="942.1" width="27.0" height="9.1" fill="#d4d4d4"/>
<rect x="8.799999999999999" y="967.1" width="27.0" height="9.1" fill="#d4d4d4"/>
<rect x="8.799999999999999" y="991.1" width="27.0" height="9.1" fill="#d4d4d4"/>
</svg>
<div class="page">
<svg width="975" height="760" viewBox="481.0 275.0 975 760">
<defs><linearGradient id="gl" x1="0" y1="0" x2="1" y2="0"><stop offset="0" stop-color="#BFE3E8"/><stop offset="0.55" stop-color="#C6E6EA"/><stop offset="1" stop-color="#DDF0F2"/></linearGradient><linearGradient id="gi" x1="0.15" y1="0.85" x2="0.85" y2="0.15"><stop offset="0" stop-color="#429EC3"/><stop offset="0.45" stop-color="#63B0CC"/><stop offset="1" stop-color="#9CCFDC"/></linearGradient></defs>
<circle cx="709" cy="280" r="159" fill="url(#gl)"/>
<circle cx="881.8" cy="297.4" r="24.9" fill="#9FD5DC" fill-opacity="0.45"/>
<circle cx="794" cy="377.5" r="18.5" fill="#9FD5DC" fill-opacity="0.5"/>
<path d="M603,360 Q614,374 631,386 M636,389 Q640,392 646,394 M650,396 Q668,405 690,408" fill="none" stroke="#3494BA" stroke-width="1.8" opacity="0.9"/>
<circle cx="707.6" cy="276" r="130" fill="#3494BA"/>
<path d="M833.4,284 A126.6,126.6 0 0 1 740,398.2" fill="none" stroke="#ffffff" stroke-width="1" opacity="0.7"/>
<path d="M831,292 A124.4,124.4 0 0 1 760,388" fill="none" stroke="#ffffff" stroke-width="0.7" opacity="0.45"/>
<path d="M610,393 Q645,421 692,430.5" fill="none" stroke="#ffffff" stroke-width="1.2" opacity="0.9"/>
<path d="M745,421 Q800,408 832,352" fill="none" stroke="#E8F5F7" stroke-width="1" opacity="0.9"/>
<circle cx="701.5" cy="274.5" r="89.5" fill="url(#gi)"/>
<rect x="836" y="275" width="620" height="13.1" fill="#3494BA"/>
<circle cx="556.5" cy="325" r="25" fill="#7FBAD3" fill-opacity="0.55"/>
<rect x="566.0" y="539" width="403.0" height="24" fill="#f2f2f2"/>
<rect x="1026.0" y="539" width="404.0" height="24" fill="#f2f2f2"/>
<rect x="566.0" y="588" width="403.0" height="24" fill="#f2f2f2"/>
<rect x="1026.0" y="588" width="404.0" height="24" fill="#f2f2f2"/>
<rect x="566.0" y="636" width="403.0" height="24" fill="#f2f2f2"/>
<rect x="1026.0" y="636" width="404.0" height="24" fill="#f2f2f2"/>
<rect x="566.0" y="684" width="403.0" height="25" fill="#f2f2f2"/>
<rect x="1026.0" y="684" width="404.0" height="25" fill="#f2f2f2"/>
<rect x="566.0" y="733" width="403.0" height="24" fill="#f2f2f2"/>
<rect x="1026.0" y="733" width="404.0" height="24" fill="#f2f2f2"/>
<rect x="566.0" y="846" width="403.0" height="24" fill="#f2f2f2"/>
<rect x="1026.0" y="846" width="404.0" height="24" fill="#f2f2f2"/>
<rect x="566.0" y="895" width="403.0" height="24" fill="#f2f2f2"/>
<rect x="1026.0" y="895" width="404.0" height="24" fill="#f2f2f2"/>
<rect x="566.0" y="943" width="403.0" height="25" fill="#f2f2f2"/>
<rect x="1026.0" y="943" width="404.0" height="25" fill="#f2f2f2"/>
<rect x="565" y="490" width="404" height="24.4" fill="#3494BA"/>
<rect x="1026" y="490" width="403" height="24.4" fill="#3494BA"/>
<rect x="565" y="798" width="404" height="23.4" fill="#59B5C1"/>
<rect x="1026" y="798" width="403" height="23.4" fill="#59B5C1"/>
<path d="M507,325.5 H1430 M507,434.5 H1430 M507,490.5 H1430 M507,514.5 H1430 M507,538.5 H1430 M507,562.5 H1430 M507,587.5 H1430 M507,611.5 H1430 M507,635.5 H1430 M507,659.5 H1430 M507,683.5 H1430 M507,708.5 H1430 M507,732.5 H1430 M507,756.5 H1430 M507,798.5 H1430 M507,821.5 H1430 M507,845.5 H1430 M507,869.5 H1430 M507,894.5 H1430 M507,918.5 H1430 M507,942.5 H1430 M507,967.5 H1430 M507,991.5 H1430 M507.5,325 V980 M1429.5,325 V980 M561.5,325 V434 M565.5,434 V980 M968.5,434 V980 M1025.5,434 V980 M815.5,490 V757 M815.5,798 V980 M1276.5,490 V757 M1276.5,798 V980 " fill="none" stroke="#000" stroke-width="1" stroke-dasharray="1 3"/>
<rect x="1183.4" y="768.4" width="1.7" height="27" fill="#000"/>
</svg>
<span class="t" style="left:773.00px;top:111.80px;font-size:36px;color:#5BB4C0;letter-spacing:-0.133px;">WEEK OF</span>
<span class="t" style="left:247.70px;top:189.30px;font-size:20px;color:#35354a;letter-spacing:0.270px;font-weight:700;">Monday</span>
<span class="t" style="left:706.30px;top:189.30px;font-size:20px;color:#35354a;letter-spacing:0.158px;font-weight:700;">Tuesday</span>
<span class="t" style="left:230.00px;top:497.10px;font-size:20px;color:#35354a;letter-spacing:0.113px;font-weight:700;">Wednesday</span>
<span class="t" style="left:704.60px;top:497.10px;font-size:20px;color:#35354a;letter-spacing:-0.514px;font-weight:700;">Thursday</span>
<span class="t" style="left:94.20px;top:219.10px;font-size:16.6px;color:#fff;letter-spacing:0.283px;">NAME</span>
<span class="t" style="left:344.20px;top:219.10px;font-size:16.6px;color:#fff;letter-spacing:0.090px;">NUMBER</span>
<span class="t" style="left:554.20px;top:219.10px;font-size:16.6px;color:#fff;letter-spacing:0.583px;">NAME</span>
<span class="t" style="left:805.00px;top:219.10px;font-size:16.6px;color:#fff;letter-spacing:0.050px;">NUMBER</span>
<span class="t" style="left:94.20px;top:527.00px;font-size:16.6px;color:#fff;letter-spacing:0.283px;">NAME</span>
<span class="t" style="left:344.20px;top:527.00px;font-size:16.6px;color:#fff;letter-spacing:0.090px;">NUMBER</span>
<span class="t" style="left:554.20px;top:527.00px;font-size:16.6px;color:#fff;letter-spacing:0.583px;">NAME</span>
<span class="t" style="left:805.00px;top:527.00px;font-size:16.6px;color:#fff;letter-spacing:0.050px;">NUMBER</span>
<span class="t" style="left:94.20px;top:243.00px;font-size:14.2px;color:#404040;letter-spacing:0.143px;">Client name here</span>
<span class="t" style="left:344.60px;top:243.00px;font-size:14.2px;color:#404040;letter-spacing:0.077px;">404.555.0132</span>
<span class="t" style="left:44.00px;top:243.00px;font-size:15.4px;color:#35354a;letter-spacing:0.283px;">8:00</span>
<span class="t" style="left:504.80px;top:243.00px;font-size:15.4px;color:#35354a;letter-spacing:0.250px;">8:00</span>
<span class="t" style="left:44.00px;top:267.00px;font-size:15.4px;color:#35354a;letter-spacing:0.283px;">9:00</span>
<span class="t" style="left:504.80px;top:267.00px;font-size:15.4px;color:#35354a;letter-spacing:0.250px;">9:00</span>
<span class="t" style="left:44.00px;top:291.00px;font-size:15.4px;color:#35354a;letter-spacing:0.283px;">10:0</span>
<span class="t" style="left:504.80px;top:291.00px;font-size:15.4px;color:#35354a;letter-spacing:0.250px;">10:0</span>
<span class="t" style="left:44.00px;top:316.00px;font-size:15.4px;color:#35354a;letter-spacing:0.650px;">11:0</span>
<span class="t" style="left:504.80px;top:316.00px;font-size:15.4px;color:#35354a;letter-spacing:0.617px;">11:0</span>
<span class="t" style="left:44.00px;top:340.00px;font-size:15.4px;color:#35354a;letter-spacing:0.283px;">12:0</span>
<span class="t" style="left:504.80px;top:340.00px;font-size:15.4px;color:#35354a;letter-spacing:0.250px;">12:0</span>
<span class="t" style="left:44.00px;top:364.00px;font-size:15.4px;color:#35354a;letter-spacing:0.283px;">1:00</span>
<span class="t" style="left:504.80px;top:364.00px;font-size:15.4px;color:#35354a;letter-spacing:0.250px;">1:00</span>
<span class="t" style="left:44.00px;top:388.00px;font-size:15.4px;color:#35354a;letter-spacing:0.283px;">2:00</span>
<span class="t" style="left:504.80px;top:388.00px;font-size:15.4px;color:#35354a;letter-spacing:0.250px;">2:00</span>
<span class="t" style="left:44.00px;top:412.00px;font-size:15.4px;color:#35354a;letter-spacing:0.283px;">3:00</span>
<span class="t" style="left:504.80px;top:412.00px;font-size:15.4px;color:#35354a;letter-spacing:0.250px;">3:00</span>
<span class="t" style="left:44.00px;top:437.00px;font-size:15.4px;color:#35354a;letter-spacing:0.283px;">4:00</span>
<span class="t" style="left:504.80px;top:437.00px;font-size:15.4px;color:#35354a;letter-spacing:0.250px;">4:00</span>
<span class="t" style="left:44.00px;top:461.00px;font-size:15.4px;color:#35354a;letter-spacing:0.283px;">5:00</span>
<span class="t" style="left:504.80px;top:461.00px;font-size:15.4px;color:#35354a;letter-spacing:0.250px;">5:00</span>
<span class="t" style="left:44.00px;top:550.00px;font-size:15.4px;color:#35354a;letter-spacing:0.283px;">8:00</span>
<span class="t" style="left:504.80px;top:550.00px;font-size:15.4px;color:#35354a;letter-spacing:0.250px;">8:00</span>
<span class="t" style="left:44.00px;top:574.00px;font-size:15.4px;color:#35354a;letter-spacing:0.283px;">9:00</span>
<span class="t" style="left:504.80px;top:574.00px;font-size:15.4px;color:#35354a;letter-spacing:0.250px;">9:00</span>
<span class="t" style="left:44.00px;top:598.00px;font-size:15.4px;color:#35354a;letter-spacing:0.283px;">10:0</span>
<span class="t" style="left:504.80px;top:598.00px;font-size:15.4px;color:#35354a;letter-spacing:0.250px;">10:0</span>
<span class="t" style="left:44.00px;top:623.00px;font-size:15.4px;color:#35354a;letter-spacing:0.650px;">11:0</span>
<span class="t" style="left:504.80px;top:623.00px;font-size:15.4px;color:#35354a;letter-spacing:0.617px;">11:0</span>
<span class="t" style="left:44.00px;top:647.00px;font-size:15.4px;color:#35354a;letter-spacing:0.283px;">12:0</span>
<span class="t" style="left:504.80px;top:647.00px;font-size:15.4px;color:#35354a;letter-spacing:0.250px;">12:0</span>
<span class="t" style="left:44.00px;top:671.00px;font-size:15.4px;color:#35354a;letter-spacing:0.283px;">1:00</span>
<span class="t" style="left:504.80px;top:671.00px;font-size:15.4px;color:#35354a;letter-spacing:0.250px;">1:00</span>
<span class="t" style="left:44.00px;top:696.00px;font-size:15.4px;color:#35354a;letter-spacing:0.283px;">2:00</span>
<span class="t" style="left:504.80px;top:696.00px;font-size:15.4px;color:#35354a;letter-spacing:0.250px;">2:00</span>
</div>
<div class="abs" style="left:484px;top:89px;width:24px;height:24px;background:#fff;border:1px solid #c4c4c4"></div>
<svg width="1719" height="200" viewBox="0 212 1719 200"><path fill="#858585" d="M496,303.9 L500,308 H497.05 V311.95 H500.8 V309 L504.9,313 L500.8,317 V314.05 H497.05 V318 H500 L496,322.1 L492,318 H494.95 V314.05 H491.2 V317 L487.1,313 L491.2,309 V311.95 H494.95 V308 H492 Z"/></svg>
</div>
<div class="statusbar">
<span class="t" style="left:24.60px;top:11.00px;font-size:17.5px;color:#262626;letter-spacing:-0.009px;">English - United States</span>
<span class="t" style="left:239.60px;top:11.00px;font-size:17.5px;color:#262626;">84 words</span>
<span class="t" style="left:948.40px;top:10.80px;font-size:17.5px;color:#777;letter-spacing:-0.075px;">1/2</span>
<svg width="1719" height="34" viewBox="0 972 1719 34">
<path fill="#aab3bb" d="M847,981.2 V997.6 L837.6,989.4 Z M834,981 H835.3 V997.8 H834 Z M882,981.2 V997.6 L872.4,989.4 Z"/>
<path fill="#45545F" d="M1038.4,981.2 V997.6 L1048,989.4 Z M1072.2,981.2 V997.6 L1081.6,989.4 Z M1083.4,981 H1084.7 V997.8 H1083.4 Z"/>
<path fill="none" stroke="#45545F" stroke-width="1.2" d="M1644.6,981.6 H1655.4 L1660.6,986.8 V998.4 H1644.6 Z M1648.4,986.4 H1652 M1648.4,990.4 H1657 M1648.4,994.4 H1657"/>
<path fill="#45545F" d="M1655.2,981.4 L1660.8,987 H1655.2 Z"/>
<path fill="none" stroke="#45545F" stroke-width="1.2" d="M1680.6,981.6 H1696.6 V998.4 H1680.6 Z M1684.2,986.4 H1693 M1684.2,990.4 H1693 M1684.2,994.4 H1693"/>
</svg>
</div>
</div></body></html>
